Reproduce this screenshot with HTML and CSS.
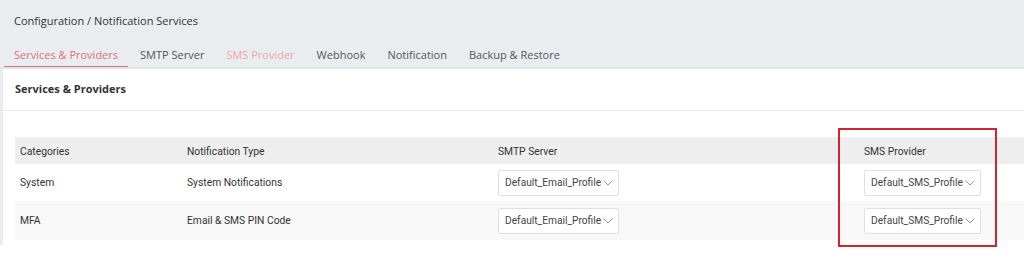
FILE: index.html
```html
<!DOCTYPE html>
<html lang="en">
<head>
    <meta charset="UTF-8">
    <meta name="viewport" content="width=device-width, initial-scale=1.0">
    <title>Notification Services</title>
    <link rel="stylesheet" href="styles.css">
</head>
<body>
    <div class="top-bar">
        <div class="breadcrumb">Configuration / Notification Services</div>
        <div class="tabs">
            <div class="tab active">Services &amp; Providers</div>
            <div class="tab">SMTP Server</div>
            <div class="tab hover">SMS Provider</div>
            <div class="tab">Webhook</div>
            <div class="tab">Notification</div>
            <div class="tab">Backup &amp; Restore</div>
        </div>
    </div>

    <div class="panel">
        <div class="panel-header">Services &amp; Providers</div>
        <div class="panel-body">
            <table class="services-table">
                <thead>
                    <tr>
                        <th class="col-cat">Categories</th>
                        <th class="col-type">Notification Type</th>
                        <th class="col-smtp">SMTP Server</th>
                        <th class="col-sms">SMS Provider</th>
                    </tr>
                </thead>
                <tbody>
                    <tr>
                        <td>System</td>
                        <td>System Notifications</td>
                        <td><div class="select">Default_Email_Profile <span class="chevron"><svg width="10" height="6" viewBox="0 0 10 6"><path d="M0.5 0.5 L5 5 L9.5 0.5" fill="none" stroke="#999" stroke-width="1"/></svg></span></div></td>
                        <td><div class="select">Default_SMS_Profile <span class="chevron"><svg width="10" height="6" viewBox="0 0 10 6"><path d="M0.5 0.5 L5 5 L9.5 0.5" fill="none" stroke="#999" stroke-width="1"/></svg></span></div></td>
                    </tr>
                    <tr class="alt">
                        <td>MFA</td>
                        <td>Email &amp; SMS PIN Code</td>
                        <td><div class="select">Default_Email_Profile <span class="chevron"><svg width="10" height="6" viewBox="0 0 10 6"><path d="M0.5 0.5 L5 5 L9.5 0.5" fill="none" stroke="#999" stroke-width="1"/></svg></span></div></td>
                        <td><div class="select">Default_SMS_Profile <span class="chevron"><svg width="10" height="6" viewBox="0 0 10 6"><path d="M0.5 0.5 L5 5 L9.5 0.5" fill="none" stroke="#999" stroke-width="1"/></svg></span></div></td>
                    </tr>
                </tbody>
            </table>
            <!-- annotation box around the SMS Provider column -->
            <div class="highlight-box"></div>
        </div>
    </div>
</body>
</html>
```

FILE: styles.css
```css
/* General Reset */
* {
    margin: 0;
    padding: 0;
    box-sizing: border-box;
}

body {
    font-family: "Open Sans", Arial, sans-serif;
    background-color: #fff;
    color: #333;
    width: 1024px;
    height: 261px;
    overflow: hidden;
}

.top-bar {
    background-color: #e9edf0;
    height: 69px;
    border-bottom: 2px solid #dfe5e8;
}

.breadcrumb {
    font-size: 11px;
    color: #333;
    padding: 13px 0 0 14px;
    height: 44px;
}

.tabs {
    display: flex;
    gap: 2px;
    padding-left: 4px;
}

.tab {
    font-size: 11px;
    color: #555;
    padding: 1px 10px 0;
    height: 23px;
    line-height: 20px;
    border-bottom: 1px solid transparent;
}

.tab.active {
    color: #e0707c;
    border-bottom: 1px solid #e0707c;
}

.tab.hover {
    color: #f2a5ad;
}

.panel {
    background-color: #fff;
    margin-left: 3px;
    height: 176px;
    box-shadow: -3px 0 0 #e9edf0;
}

.panel-header {
    font-size: 11px;
    font-weight: bold;
    color: #333;
    padding: 12px 0 0 12px;
    height: 42px;
    border-bottom: 1px solid #e6e9eb;
}

.panel-body {
    position: relative;
    padding: 26px 0 0 12px;
}

.services-table {
    border-collapse: collapse;
    font-family: Roboto, Arial, sans-serif;
    font-size: 10.3px;
    color: #333;
    width: 1020px;
    table-layout: fixed;
}

.services-table th {
    background-color: #eeeeee;
    font-weight: normal;
    text-align: left;
    height: 27px;
    padding: 1px 5px 0;
}

.services-table td {
    height: 37px;
    padding: 0 5px;
}

.services-table tr.alt td {
    background-color: #f8f8f8;
    height: 39px;
}

.col-cat { width: 167px; }
.col-type { width: 311px; }
.col-smtp { width: 366px; }
.col-sms { width: 176px; }

.select {
    display: inline-flex;
    align-items: center;
    gap: 2px;
    height: 26px;
    padding: 0 5px 0 6px;
    border: 1px solid #e0e0e0;
    border-radius: 2px;
    background-color: #fff;
    font-size: 10.2px;
    color: #444;
}

.chevron {
    display: flex;
    align-items: center;
}

.highlight-box {
    position: absolute;
    left: 835px;
    top: 17px;
    width: 159px;
    height: 119px;
    border: 2px solid #d2232f;
}
```
